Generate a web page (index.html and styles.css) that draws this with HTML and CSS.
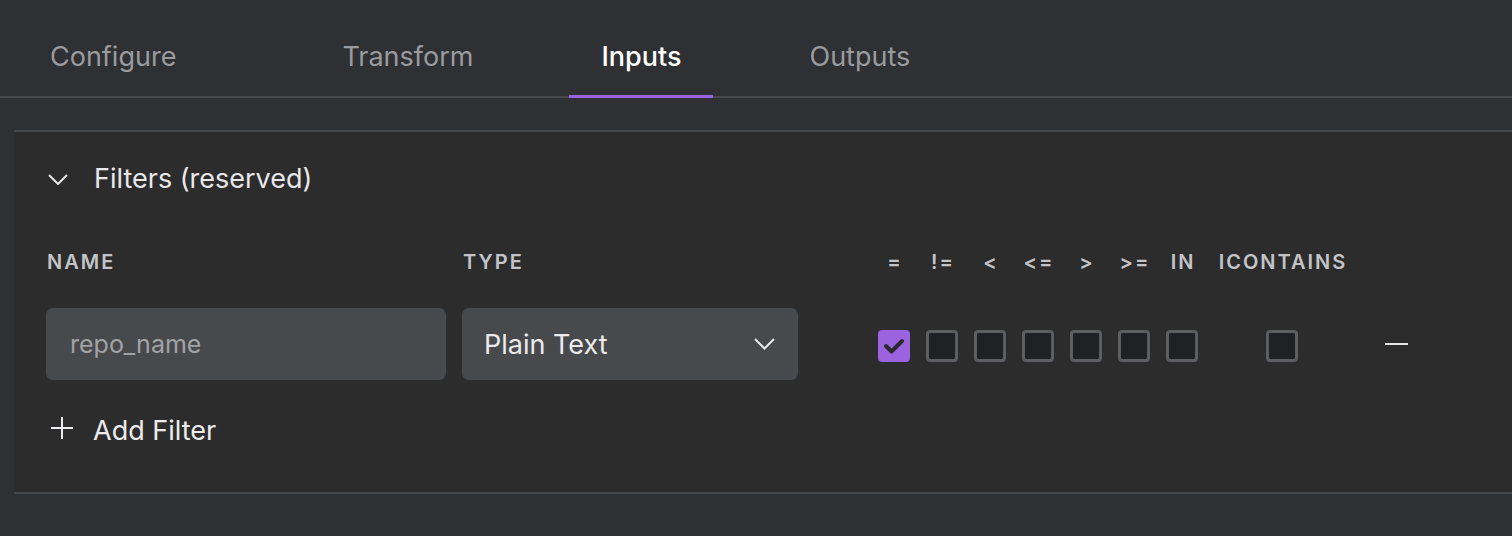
FILE: index.html
```html
<!DOCTYPE html>
<html lang="en">
<head>
  <meta charset="UTF-8">
  <meta name="viewport" content="width=device-width, initial-scale=1.0">
  <title>Inputs</title>
  <link rel="stylesheet" href="styles.css">
</head>
<body>
  <!-- Tabs -->
  <nav class="tabs">
    <div class="tab tab-first">Configure</div>
    <div class="tab">Transform</div>
    <div class="tab active">Inputs</div>
    <div class="tab">Outputs</div>
  </nav>

  <main class="content">
    <section class="panel">
      <div class="panel-header">
        <svg class="chevron" width="20" height="11" viewBox="0 0 20 11"><polyline points="1,1 10,10 19,1" fill="none" stroke="#e6e6e8" stroke-width="2"/></svg>
        <span>Filters (reserved)</span>
      </div>

      <div class="filter-grid">
        <div class="col-label">Name</div>
        <div class="col-label">Type</div>
        <div class="col-label op">=</div>
        <div class="col-label op">!=</div>
        <div class="col-label op">&lt;</div>
        <div class="col-label op">&lt;=</div>
        <div class="col-label op">&gt;</div>
        <div class="col-label op">&gt;=</div>
        <div class="col-label op">In</div>
        <div class="col-label op">Icontains</div>
        <div></div>

        <div class="cell"><input class="name-input" type="text" placeholder="repo_name"></div>
        <div class="cell">
          <div class="select">
            <span>Plain Text</span>
            <svg width="21" height="12" viewBox="0 0 21 12"><polyline points="1,1 10.5,10.5 20,1" fill="none" stroke="#e6e6e8" stroke-width="2"/></svg>
          </div>
        </div>
        <div class="cell center">
          <span class="checkbox checked">
            <svg width="32" height="32" viewBox="0 0 32 32"><polyline points="8,16 13.5,21.5 24,11" fill="none" stroke="#2a2a2e" stroke-width="4" stroke-linecap="round" stroke-linejoin="round"/></svg>
          </span>
        </div>
        <div class="cell center"><span class="checkbox"></span></div>
        <div class="cell center"><span class="checkbox"></span></div>
        <div class="cell center"><span class="checkbox"></span></div>
        <div class="cell center"><span class="checkbox"></span></div>
        <div class="cell center"><span class="checkbox"></span></div>
        <div class="cell center"><span class="checkbox"></span></div>
        <div class="cell center"><span class="checkbox"></span></div>
        <div class="cell center"><span class="remove"></span></div>
      </div>

      <div class="add-filter">
        <svg width="22" height="22" viewBox="0 0 22 22"><path d="M11 0 V22 M0 11 H22" stroke="#ececee" stroke-width="2"/></svg>
        <span>Add Filter</span>
      </div>
    </section>
  </main>
</body>
</html>
```

FILE: styles.css
```css
/* General */
body {
  margin: 0;
  background: #2f3034;
  font-family: Inter, "Noto Sans", sans-serif;
  color: #e8e8ea;
  overflow: hidden;
}

/* Tabs */
.tabs {
  display: flex;
  height: 96px;
  padding-left: 18px;
  border-bottom: 2px solid #47484c;
}

.tab {
  position: relative;
  display: flex;
  align-items: center;
  padding: 16px 32px 0;
  margin-right: 64px;
  font-size: 27px;
  color: #9a9b9f;
}

.tab-first {
  margin-right: 102px;
}

.tab.active {
  color: #ffffff;
  font-weight: 500;
}

.tab.active::after {
  content: "";
  position: absolute;
  left: 0;
  right: 0;
  bottom: -2px;
  height: 3px;
  background: #9b63e0;
}

/* Panel */
.content {
  padding: 32px 0 0 14px;
}

.panel {
  background: #2c2c2c;
  border-top: 2px solid #47484c;
  border-bottom: 2px solid #47484c;
  padding: 30px 0 46px 32px;
}

.panel-header {
  display: flex;
  align-items: center;
  height: 32px;
  font-size: 27px;
  color: #e8e8ea;
}

.panel-header .chevron {
  margin: 2px 26px 0 2px;
}

/* Filter table */
.filter-grid {
  display: grid;
  grid-template-columns: 416px 408px repeat(7, 48px) 152px 76px;
  grid-template-rows: 24px 72px;
  row-gap: 34px;
  margin-top: 56px;
}

.col-label {
  font-size: 20px;
  font-weight: 600;
  letter-spacing: 2px;
  line-height: 24px;
  text-transform: uppercase;
  color: #c3c4c8;
  padding-left: 1px;
}

.col-label.op {
  text-align: center;
  padding-left: 2px;
}

.cell {
  display: flex;
  align-items: center;
}

.cell.center {
  justify-content: center;
}

.name-input {
  width: 400px;
  height: 72px;
  box-sizing: border-box;
  border: none;
  border-radius: 7px;
  background: #48494c;
  padding: 0 24px;
  font-family: inherit;
  font-size: 25px;
  color: #e8e8ea;
  outline: none;
}

.name-input::placeholder {
  color: #a2a3a7;
}

.select {
  width: 336px;
  height: 72px;
  box-sizing: border-box;
  display: flex;
  align-items: center;
  justify-content: space-between;
  padding: 0 23px 0 22px;
  border-radius: 7px;
  background: #48494c;
  font-size: 27px;
  color: #ececee;
}

.checkbox {
  width: 32px;
  height: 32px;
  margin-top: 4px;
  box-sizing: border-box;
  border: 3px solid #5d5e62;
  border-radius: 4px;
  background: #202124;
}

.checkbox.checked {
  border: none;
  background: #9b63e0;
}

.checkbox svg {
  display: block;
}

.remove {
  width: 23px;
  height: 2px;
  background: #e6e6e8;
}

/* Add filter */
.add-filter {
  display: flex;
  align-items: center;
  height: 32px;
  margin-top: 34px;
  font-size: 27px;
  color: #ececee;
}

.add-filter svg {
  margin: 0 20px 4px 5px;
}
```
